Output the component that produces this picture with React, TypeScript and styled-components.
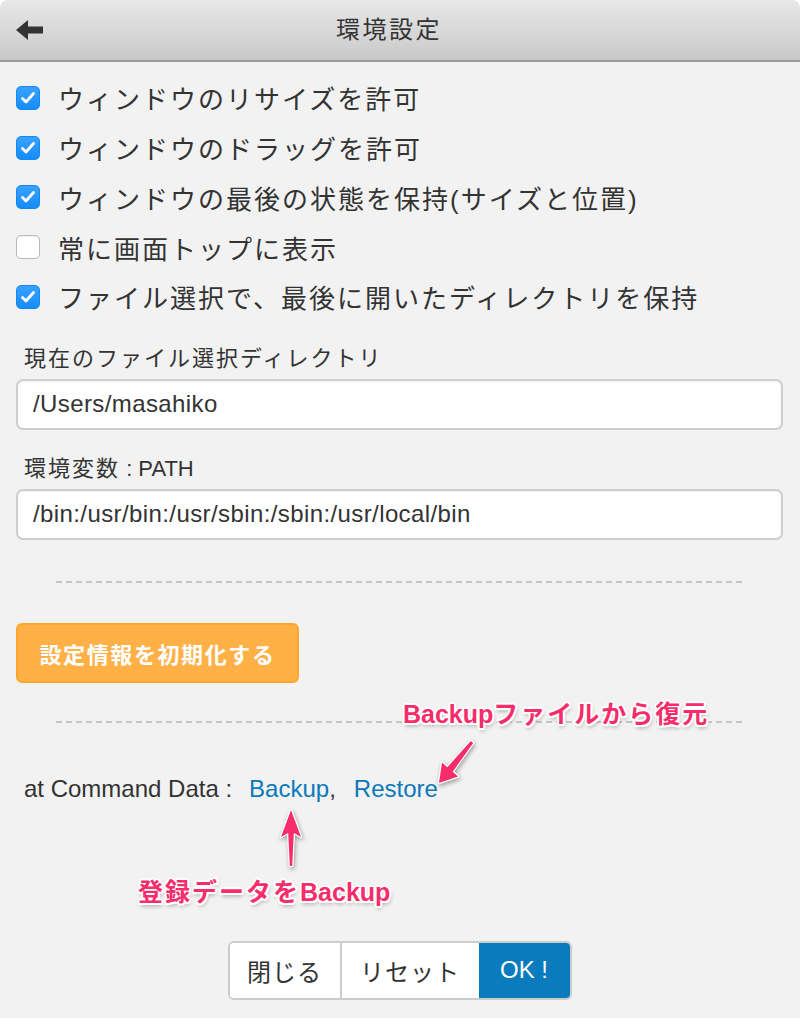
import React from "react";
import styled, { createGlobalStyle, css } from "styled-components";

const SANS = `"Liberation Sans", "Noto Sans CJK JP", sans-serif`;

const GlobalStyle = createGlobalStyle`
  html, body { margin: 0; padding: 0; background: #ffffff; }
  body { font-family: ${SANS}; color: #333333; }
`;

const Window = styled.div`
  position: relative;
  width: 800px;
  height: 1018px;
  overflow: hidden;
  background: #f2f2f2;
  border-radius: 8px 8px 0 0;
  display: flex;
  flex-direction: column;
`;

const Header = styled.header`
  flex-shrink: 0;
  height: 60px;
  border-bottom: 2px solid #9d9d9d;
  background: linear-gradient(to bottom, #e8e8e8 0%, #c9c9c9 100%);
  display: grid;
  grid-template-columns: 60px 1fr 82px;
  align-items: center;
`;

const BackButton = styled.button`
  height: 100%;
  border: 0;
  background: none;
  padding: 0 0 0 16px;
  display: flex;
  align-items: center;
  cursor: pointer;
`;

const Title = styled.h1`
  margin: 0;
  text-align: center;
  font-family: ${SANS};
  font-size: 24px;
  font-weight: normal;
  line-height: 1;
  letter-spacing: 2.5px;
  color: #333333;
`;

const Content = styled.main`
  padding: 11px 17px 0 16px;
  display: flex;
  flex-direction: column;
`;

const CheckList = styled.div`
  display: flex;
  flex-direction: column;
`;

const CheckRow = styled.label`
  height: 49.75px;
  display: flex;
  align-items: center;
  gap: 18px;
  font-size: 26px;
  letter-spacing: 2px;
  color: #333333;
  cursor: pointer;
`;

const Box = styled.span<{ $checked: boolean }>`
  flex-shrink: 0;
  width: 24px;
  height: 24px;
  box-sizing: border-box;
  border-radius: 5px;
  display: flex;
  align-items: center;
  justify-content: center;
  ${(p) =>
    p.$checked
      ? css`
          background: linear-gradient(to bottom, #3aa2ff, #158cf8);
          border: 1px solid #138af3;
        `
      : css`
          background: #ffffff;
          border: 1px solid #b8b8b8;
          box-shadow: inset 0 1px 1px rgba(0, 0, 0, 0.06);
        `}
`;

const FieldLabel = styled.div<{ $top: number }>`
  margin: ${(p) => p.$top}px 0 5px 8px;
  font-size: 22px;
  line-height: 30px;
  letter-spacing: 2px;
  color: #333333;
`;

const TextInput = styled.input`
  box-sizing: border-box;
  width: 100%;
  height: 51px;
  margin: 0;
  padding: 0 15px;
  border: 2px solid #cecece;
  border-radius: 7px;
  background: #ffffff;
  box-shadow: inset 0 1px 2px rgba(0, 0, 0, 0.06);
  font-family: ${SANS};
  font-size: 24px;
  letter-spacing: 0.4px;
  color: #333333;
  outline: none;
`;

const Divider = styled.div<{ $top: number }>`
  margin: ${(p) => p.$top}px 39px 0 40px;
  height: 2px;
  background: repeating-linear-gradient(
    to right,
    #c6c6c6 0,
    #c6c6c6 6px,
    transparent 6px,
    transparent 10px
  );
`;

const ResetButton = styled.button`
  align-self: flex-start;
  margin-top: 40px;
  width: 283px;
  height: 60px;
  box-sizing: border-box;
  border: 2px solid #ffa62b;
  border-radius: 6px;
  background: #ffb147;
  color: #ffffff;
  font-family: ${SANS};
  font-size: 22px;
  font-weight: bold;
  letter-spacing: 1.6px;
  cursor: pointer;
`;

const CommandLine = styled.div`
  margin: 52px 0 0 8px;
  font-size: 24px;
  line-height: 28px;
  color: #333333;
  display: flex;
  align-items: baseline;
`;

const Link = styled.a<{ $gap: number }>`
  margin-left: ${(p) => p.$gap}px;
  color: #0a78b9;
  text-decoration: none;
  cursor: pointer;
`;

const ButtonGroup = styled.div`
  align-self: center;
  margin-top: 138px;
  display: flex;
  height: 59px;
  box-sizing: border-box;
  border: 2px solid #cccccc;
  border-radius: 6px;
  overflow: hidden;
  background: #ffffff;
`;

const GroupButton = styled.button<{ $width: number; $primary?: boolean; $divider?: boolean }>`
  width: ${(p) => p.$width}px;
  height: 100%;
  margin: 0;
  border: 0;
  border-right: ${(p) => (p.$divider ? "2px solid #cccccc" : "0")};
  background: ${(p) => (p.$primary ? "#0a7bbd" : "#ffffff")};
  color: ${(p) => (p.$primary ? "#ffffff" : "#333333")};
  font-family: ${SANS};
  font-size: 24px;
  letter-spacing: ${(p) => (p.$primary ? "0" : "1px")};
  cursor: pointer;
`;

const Note = styled.div<{ $left: number; $top: number }>`
  position: absolute;
  left: ${(p) => p.$left}px;
  top: ${(p) => p.$top}px;
  font-family: ${SANS};
  font-size: 25px;
  font-weight: bold;
  line-height: 30px;
  letter-spacing: 2px;
  white-space: nowrap;
  color: #f72d6b;
  text-shadow: 2px 0 0 #fff, -2px 0 0 #fff, 0 2px 0 #fff, 0 -2px 0 #fff,
    1.5px 1.5px 0 #fff, -1.5px 1.5px 0 #fff, 1.5px -1.5px 0 #fff,
    -1.5px -1.5px 0 #fff, 1px 3px 4px rgba(0, 0, 0, 0.35);
`;

const Latin = styled.span`
  letter-spacing: 0;
`;

const ArrowSvg = styled.svg<{ $left: number; $top: number }>`
  position: absolute;
  left: ${(p) => p.$left}px;
  top: ${(p) => p.$top}px;
  overflow: visible;
  filter: drop-shadow(1px 2px 2px rgba(0, 0, 0, 0.35));
`;

const ArrowShape = styled.polygon`
  fill: #f72d6b;
  stroke: #ffffff;
  stroke-width: 2.5;
  stroke-linejoin: round;
  paint-order: stroke;
`;

const BackIcon = () => (
  <svg width="27" height="21" viewBox="0 0 27 21">
    <polygon points="0,10 12,0 12,6.5 27,6.5 27,13.5 12,13.5 12,20" fill="#333333" />
  </svg>
);

const CheckMark = () => (
  <svg width="16" height="14" viewBox="0 0 16 14">
    <polyline
      points="2.5,7.5 6,11 13.5,2.5"
      fill="none"
      stroke="#ffffff"
      strokeWidth="2.8"
      strokeLinecap="round"
      strokeLinejoin="round"
    />
  </svg>
);

const options = [
  { label: "ウィンドウのリサイズを許可", checked: true },
  { label: "ウィンドウのドラッグを許可", checked: true },
  { label: "ウィンドウの最後の状態を保持(サイズと位置)", checked: true },
  { label: "常に画面トップに表示", checked: false },
  { label: "ファイル選択で、最後に開いたディレクトリを保持", checked: true },
];

export default function App() {
  return (
    <>
      <GlobalStyle />
      <Window>
        <Header>
          <BackButton aria-label="戻る">
            <BackIcon />
          </BackButton>
          <Title>環境設定</Title>
          <span />
        </Header>
        <Content>
          <CheckList>
            {options.map((o) => (
              <CheckRow key={o.label}>
                <Box $checked={o.checked}>{o.checked && <CheckMark />}</Box>
                <span>{o.label}</span>
              </CheckRow>
            ))}
          </CheckList>

          <FieldLabel $top={22}>現在のファイル選択ディレクトリ</FieldLabel>
          <TextInput readOnly value="/Users/masahiko" />

          <FieldLabel $top={24}>
            環境変数<Latin> : PATH</Latin>
          </FieldLabel>
          <TextInput readOnly value="/bin:/usr/bin:/usr/sbin:/sbin:/usr/local/bin" />

          <Divider $top={41} />

          <ResetButton>設定情報を初期化する</ResetButton>

          <Divider $top={38} />

          <CommandLine>
            <span>at Command Data :</span>
            <Link $gap={17}>Backup</Link>
            <span>,</span>
            <Link $gap={18}>Restore</Link>
          </CommandLine>

          <ButtonGroup>
            <GroupButton $width={112} $divider>
              閉じる
            </GroupButton>
            <GroupButton $width={137}>リセット</GroupButton>
            <GroupButton $width={91} $primary>
              OK !
            </GroupButton>
          </ButtonGroup>
        </Content>

        <Note $left={403} $top={699}>
          <Latin>Backup</Latin>ファイルから復元
        </Note>
        <ArrowSvg $left={430} $top={735} width="52" height="55" viewBox="0 0 52 55">
          <ArrowShape points="43.2,7.9 22.7,36.7 28,41.5 9,48 12,27.5 17.3,32.3 40.8,6.1" />
        </ArrowSvg>

        <ArrowSvg $left={276} $top={802} width="30" height="72" viewBox="0 0 30 72">
          <ArrowShape points="16.2,64 17.8,31 25,35 15,8 5,35 12.2,31 13.8,64" />
        </ArrowSvg>
        <Note $left={138} $top={877}>
          登録データを<Latin>Backup</Latin>
        </Note>
      </Window>
    </>
  );
}
